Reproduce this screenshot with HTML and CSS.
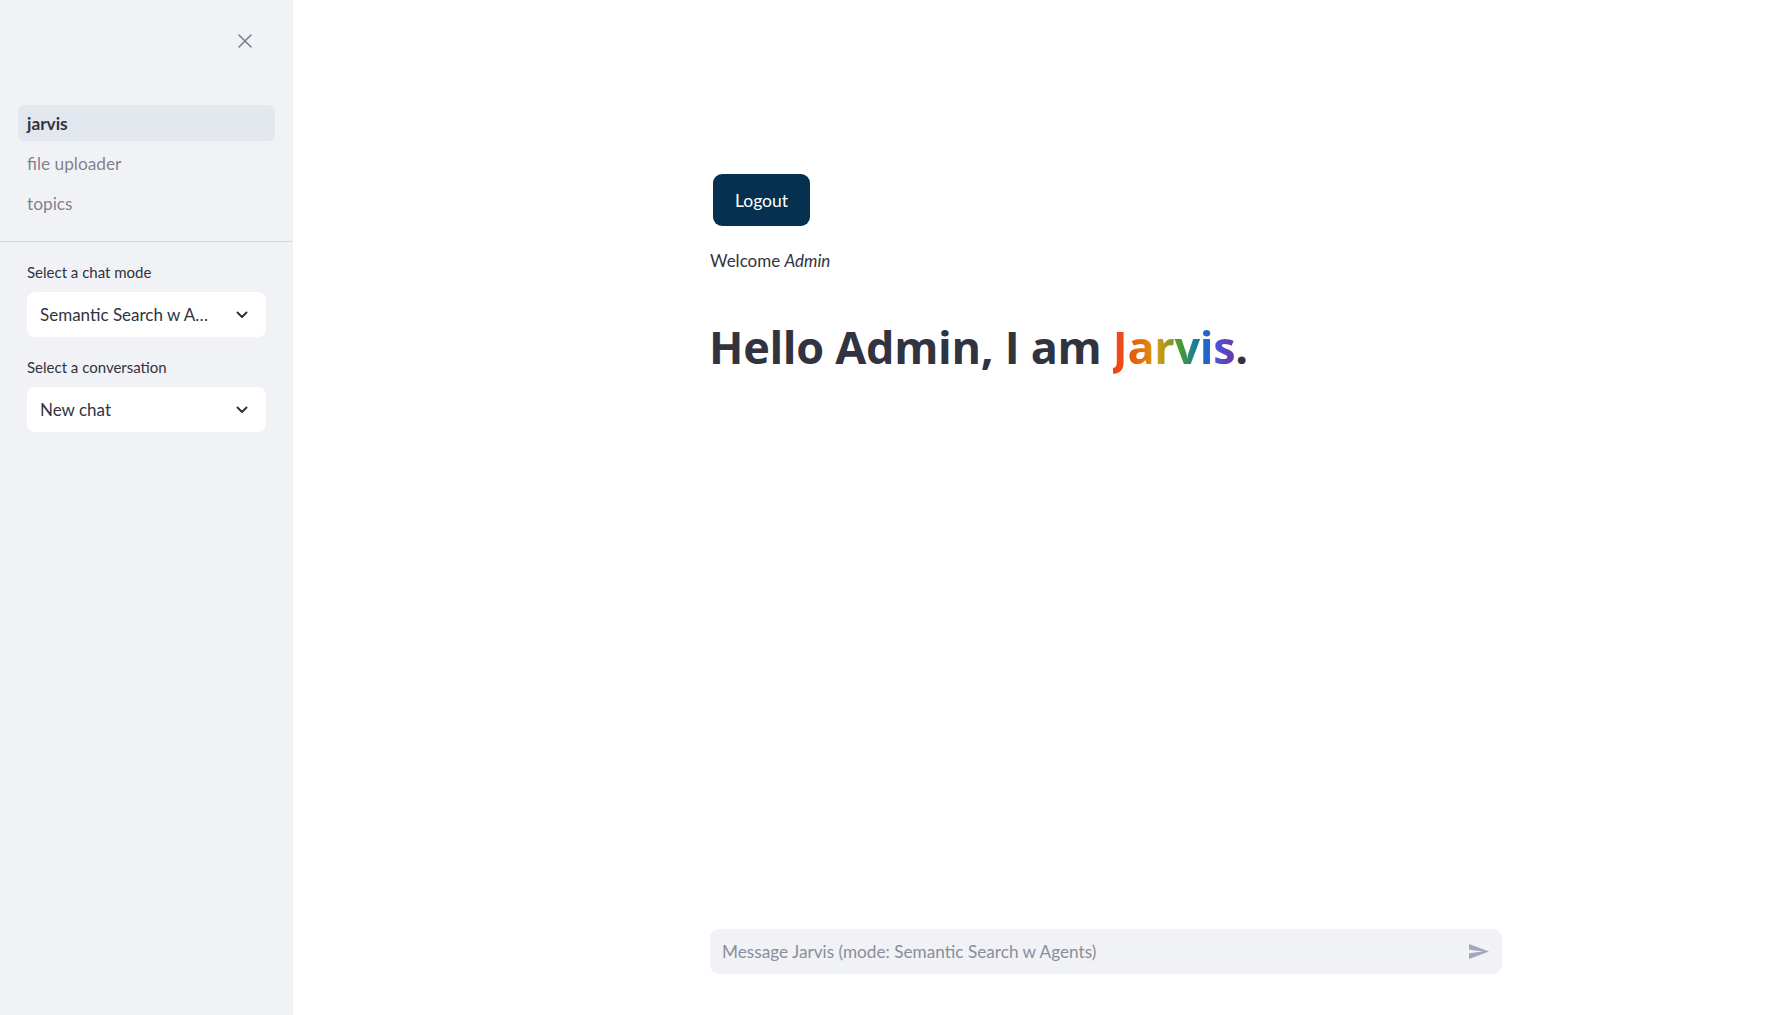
FILE: index.html
```html
<!DOCTYPE html>
<html lang="en">
<head>
<meta charset="utf-8">
<title>jarvis</title>
<link rel="stylesheet" href="styles.css">
</head>
<body>
<div class="app">
  <aside class="sidebar">
    <div class="sidebar-header">
      <button class="close-btn" aria-label="Close sidebar">
        <svg viewBox="0 0 14 14" width="14" height="14"><path d="M1 1L13 13M13 1L1 13" stroke="#7c7f8c" stroke-width="1.6" fill="none" stroke-linecap="round"/></svg>
      </button>
    </div>
    <nav class="nav">
      <a class="nav-item active">jarvis</a>
      <a class="nav-item">file uploader</a>
      <a class="nav-item">topics</a>
    </nav>
    <div class="sidebar-section">
      <div class="field">
        <label class="field-label">Select a chat mode</label>
        <div class="select">
          <span class="select-value">Semantic Search w A…</span>
          <svg class="chevron" viewBox="0 0 12 8" width="12" height="8"><path d="M1.5 1.5L6 6l4.5-4.5" stroke="#31333f" stroke-width="2" fill="none" stroke-linecap="round" stroke-linejoin="round"/></svg>
        </div>
      </div>
      <div class="field">
        <label class="field-label">Select a conversation</label>
        <div class="select">
          <span class="select-value">New chat</span>
          <svg class="chevron" viewBox="0 0 12 8" width="12" height="8"><path d="M1.5 1.5L6 6l4.5-4.5" stroke="#31333f" stroke-width="2" fill="none" stroke-linecap="round" stroke-linejoin="round"/></svg>
        </div>
      </div>
    </div>
  </aside>
  <main class="main">
    <div class="column">
      <button class="logout-btn">Logout</button>
      <p class="welcome">Welcome <em>Admin</em></p>
      <h1 class="title">Hello Admin, I am <span class="rainbow">Jarvis</span>.</h1>
      <div class="chat-input">
        <span class="placeholder">Message Jarvis (mode: Semantic Search w Agents)</span>
        <svg class="send" viewBox="2 3 21 18" width="20" height="15" preserveAspectRatio="none"><path d="M2.01 21L23 12 2.01 3 2 10l15 2-15 2z" fill="#a3a8b8"/></svg>
      </div>
    </div>
  </main>
</div>
</body>
</html>
```

FILE: styles.css
```css
* { box-sizing: border-box; }
html, body { margin: 0; padding: 0; height: 100%; }
body {
  font-family: Lato, "Noto Sans", "Liberation Sans", sans-serif;
  color: #31333f;
  background: #ffffff;
}
.app {
  display: flex;
  height: 100vh;
}
.sidebar {
  width: 293px;
  flex: 0 0 293px;
  background: #f0f2f6;
  display: flex;
  flex-direction: column;
}
.sidebar-header {
  height: 82px;
  display: flex;
  align-items: center;
  justify-content: flex-end;
  padding-right: 34px;
}
.close-btn {
  width: 28px;
  height: 28px;
  border: none;
  background: transparent;
  padding: 0;
  display: flex;
  align-items: center;
  justify-content: center;
}
.nav {
  display: flex;
  flex-direction: column;
  gap: 4px;
  padding: 23px 18px 20px;
  border-bottom: 1px solid #d5d8de;
}
.nav-item {
  height: 36px;
  display: flex;
  align-items: center;
  padding: 0 9px;
  border-radius: 6px;
  font-size: 17.3px;
  color: rgba(49, 51, 63, 0.6);
}
.nav-item.active {
  background: #e3e7ee;
  color: #31333f;
  font-weight: 700;
}
.sidebar-section {
  padding: 20px 27px 0;
  display: flex;
  flex-direction: column;
  gap: 20px;
}
.field {
  display: flex;
  flex-direction: column;
  gap: 10px;
}
.field-label {
  font-size: 15px;
  line-height: 20px;
  height: 20px;
  color: #31333f;
}
.select {
  height: 45px;
  background: #ffffff;
  border-radius: 8px;
  display: flex;
  align-items: center;
  justify-content: space-between;
  padding: 0 18px 0 13px;
}
.select-value {
  font-size: 17px;
  color: #31333f;
  white-space: nowrap;
}
.main {
  flex: 1;
  display: flex;
  padding-left: 417px;
}
.column {
  width: 792px;
  display: flex;
  flex-direction: column;
  align-items: flex-start;
  padding-top: 174px;
  padding-bottom: 41px;
}
.logout-btn {
  width: 97px;
  height: 52px;
  margin-left: 3px;
  border: none;
  border-radius: 9px;
  background: #06304f;
  color: #ffffff;
  font-family: inherit;
  font-size: 17.5px;
}
.welcome {
  margin: 21px 0 0 0;
  font-size: 17px;
  line-height: 28px;
}
.welcome em { font-style: italic; }
.title {
  margin: 44px 0 0 -1px;
  font-family: "Open Sans", Lato, sans-serif;
  font-size: 45px;
  line-height: 56px;
  font-weight: 700;
  color: #31333f;
  letter-spacing: -0.3px;
}
.rainbow {
  background: linear-gradient(to right, #f0401e, #e4620c 18%, #d99a12 36%, #4a9a30 55%, #0a72c4 72%, #4f4fd0 86%, #6b3aa5);
  -webkit-background-clip: text;
  background-clip: text;
  color: transparent;
}
.chat-input {
  margin-top: auto;
  width: 792px;
  height: 45px;
  background: #f0f2f6;
  border-radius: 9px;
  display: flex;
  align-items: center;
  justify-content: space-between;
  padding: 0 13px 0 12px;
}
.placeholder {
  font-size: 17.2px;
  color: #8a8d9a;
}
.send { display: block; }
```
